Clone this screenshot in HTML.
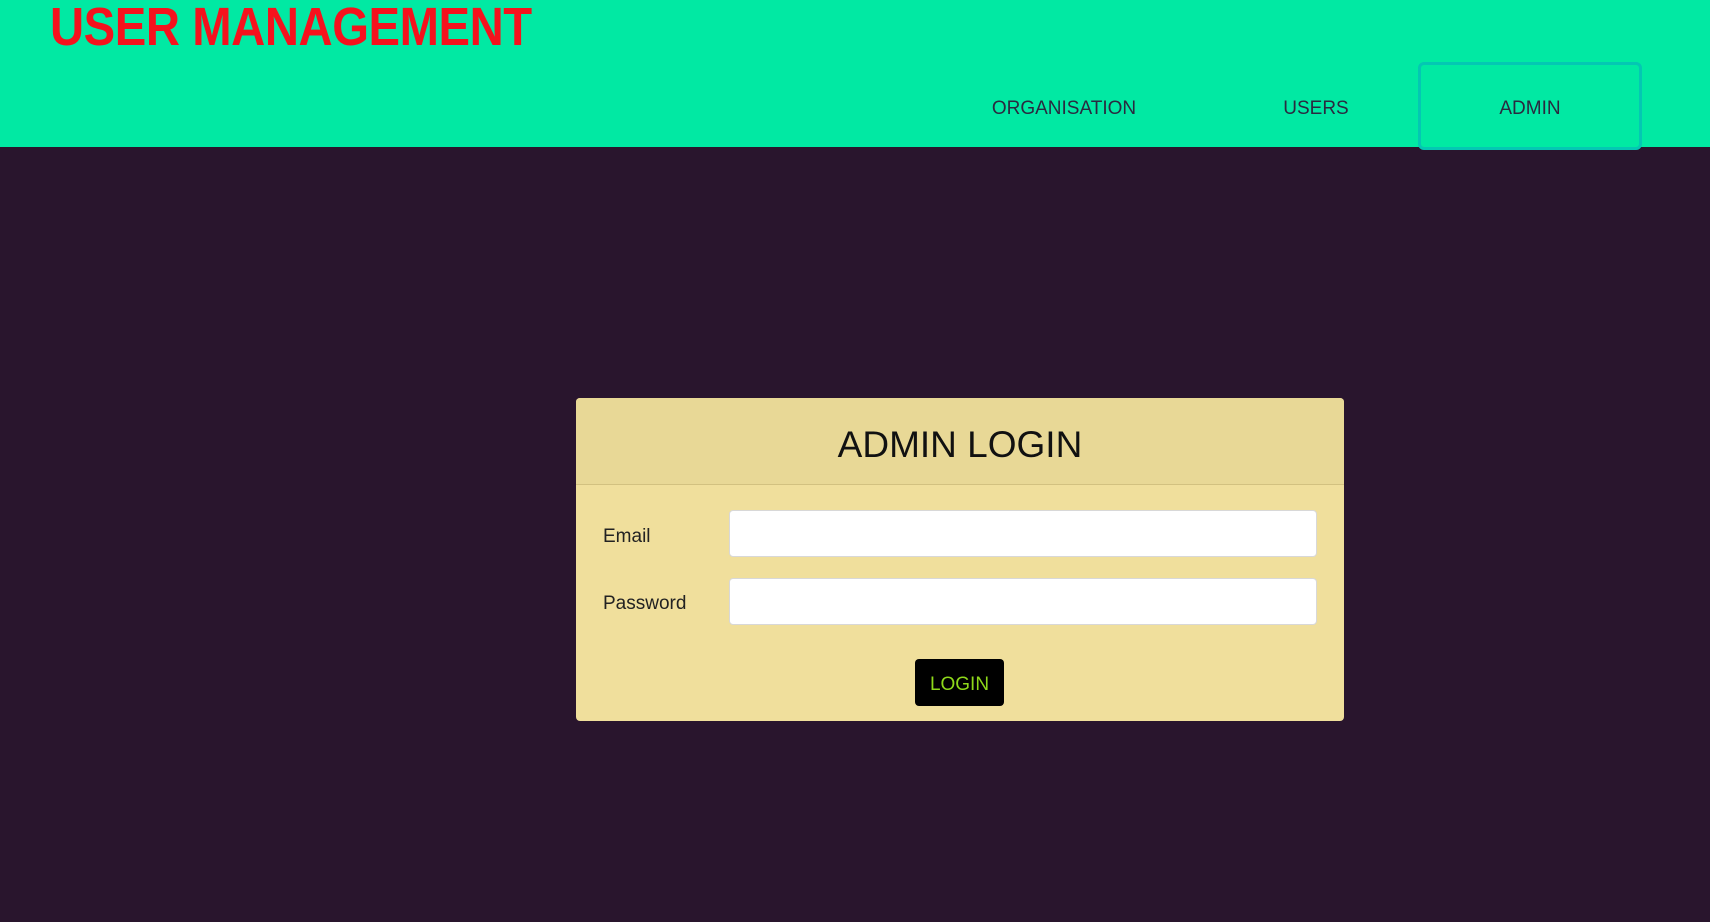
<!DOCTYPE html>
<html><head><meta charset="utf-8"><style>
*{margin:0;padding:0;box-sizing:border-box}
body{width:1710px;height:922px;background:#29152d;font-family:"Liberation Sans",sans-serif;position:relative;overflow:hidden}
.hdr{position:absolute;left:0;top:0;width:1710px;height:147px;background:#01e9a3}
.title{position:absolute;left:50px;top:-4px;font-size:54px;font-weight:bold;color:#f5121d;letter-spacing:-0.5px;white-space:nowrap;transform:scaleX(0.875);transform-origin:0 0}
.nav{position:absolute;top:98px;font-size:19px;color:#2a2a40;transform:translateX(-50%);white-space:nowrap}
.abox{position:absolute;left:1418px;top:62px;width:224px;height:88px;border:3px solid #04c7b3;border-radius:6px}
.card{position:absolute;left:576px;top:398px;width:768px;height:323px;background:#f0df9c;border-radius:4px;overflow:hidden}
.ch{height:87px;background:#e8d896;border-bottom:1px solid #d2c180;text-align:center;font-size:37px;line-height:93px;color:#111}
.lbl{position:absolute;left:27px;font-size:19px;color:#222}
.inp{position:absolute;left:153px;width:588px;height:47px;background:#fff;border:1px solid #d8d8d8;border-radius:4px}
.btn{position:absolute;left:339px;top:261px;width:89px;height:47px;background:#000;border-radius:4px;color:#8ed81a;font-size:19px;text-align:center;line-height:51px}
</style></head><body>
<div class="hdr">
<div class="title">USER MANAGEMENT</div>
<div class="nav" style="left:1064px">ORGANISATION</div>
<div class="nav" style="left:1316px">USERS</div>
<div class="abox"></div>
<div class="nav" style="left:1530px">ADMIN</div>
</div>
<div class="card">
<div class="ch">ADMIN LOGIN</div>
<div class="lbl" style="top:128px">Email</div>
<div class="inp" style="top:112px"></div>
<div class="lbl" style="top:195px">Password</div>
<div class="inp" style="top:180px"></div>
<div class="btn">LOGIN</div>
</div>
</body></html>
